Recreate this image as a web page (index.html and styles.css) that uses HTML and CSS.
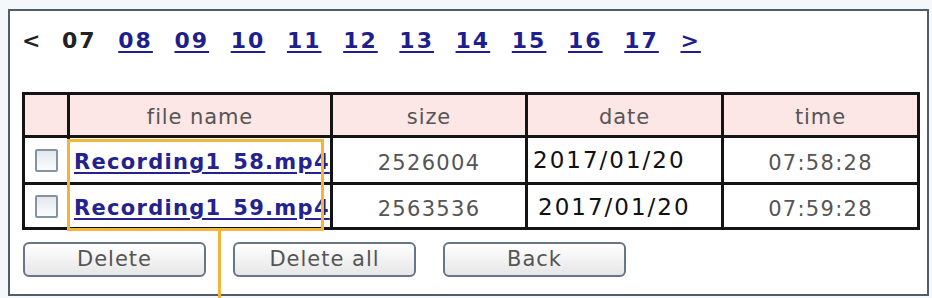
FILE: index.html
```html
<!DOCTYPE html>
<html>
<head>
<meta charset="utf-8">
<link rel="stylesheet" href="styles.css">
</head>
<body>
<div class="frame">
  <nav class="pager">
    <span class="arrow">&lt;</span>
    <span class="current">07</span>
    <a href="#">08</a>
    <a href="#">09</a>
    <a href="#">10</a>
    <a href="#">11</a>
    <a href="#">12</a>
    <a href="#">13</a>
    <a href="#">14</a>
    <a href="#">15</a>
    <a href="#">16</a>
    <a href="#">17</a>
    <a href="#" class="next">&gt;</a>
  </nav>
  <table class="files">
    <colgroup>
      <col class="c-chk">
      <col class="c-name">
      <col class="c-size">
      <col class="c-date">
      <col class="c-time">
    </colgroup>
    <thead>
      <tr><th></th><th>file name</th><th>size</th><th>date</th><th>time</th></tr>
    </thead>
    <tbody>
      <tr class="r1">
        <td class="chk"><span class="box"></span></td>
        <td class="name"><a href="#">Recording1_58.mp4</a></td>
        <td class="num">2526004</td>
        <td class="date">2017/01/20</td>
        <td class="num">07:58:28</td>
      </tr>
      <tr class="r2">
        <td class="chk"><span class="box"></span></td>
        <td class="name"><a href="#">Recording1_59.mp4</a></td>
        <td class="num">2563536</td>
        <td class="date">2017/01/20</td>
        <td class="num">07:59:28</td>
      </tr>
    </tbody>
  </table>
  <div class="actions">
    <button type="button" class="btn">Delete</button>
    <button type="button" class="btn">Delete all</button>
    <button type="button" class="btn">Back</button>
  </div>
</div>
<div class="callout"></div>
<div class="callout-line"></div>
</body>
</html>
```

FILE: styles.css
```css
html, body {
  margin: 0;
  padding: 0;
}
body {
  position: relative;
  width: 932px;
  height: 298px;
  overflow: hidden;
  background: #f5f7fa;
  font-family: "DejaVu Sans", Verdana, sans-serif;
}
.frame {
  box-sizing: border-box;
  margin: 9px 0 0 8px;
  width: 921px;
  height: 287px;
  border: 2px solid #525d6b;
  background: #ffffff;
  padding: 17px 0 0 12px;
}
.pager {
  display: flex;
  align-items: baseline;
  gap: 21.6px;
  font-size: 22px;
  line-height: 26px;
  font-weight: bold;
  letter-spacing: 2px;
}
.pager .arrow {
  color: #222;
  margin-right: -2px;
}
.pager .current {
  color: #222;
}
.pager a {
  color: #1e1e8c;
  text-decoration: underline;
  text-decoration-thickness: 2px;
  text-underline-offset: 3px;
}
.files {
  margin-top: 38px;
  border-collapse: collapse;
  table-layout: fixed;
  width: 898px;
}
.c-chk { width: 45px; }
.c-name { width: 263px; }
.c-size { width: 195px; }
.c-date { width: 196px; }
.c-time { width: 196px; }
.files th,
.files td {
  border: 3px solid #141414;
  padding: 0;
}
.files thead tr { height: 43px; }
.files th {
  background: #fce6e6;
  color: #555555;
  font-weight: normal;
  font-size: 21px;
  letter-spacing: 0.9px;
  text-align: center;
  padding-top: 4px;
}
.files .r1 { height: 47px; }
.files .r2 { height: 45px; }
.files td {
  padding-top: 4px;
  white-space: nowrap;
  overflow: hidden;
}
.files td.chk {
  text-align: center;
  padding-top: 0;
}
.box {
  display: inline-block;
  vertical-align: middle;
  box-sizing: border-box;
  width: 23px;
  height: 23px;
  border: 2px solid #8592a2;
  border-radius: 2px;
  background: linear-gradient(#e3e8ee, #fbfcfd);
}
.files td.name {
  text-align: left;
  padding-left: 4px;
}
.name a {
  color: #24228e;
  font-weight: bold;
  font-size: 21px;
  letter-spacing: 1.3px;
  text-decoration: underline;
  text-decoration-thickness: 2px;
  text-underline-offset: 3px;
}
.files td.num {
  text-align: center;
  color: #555555;
  font-size: 21px;
  letter-spacing: 1.3px;
  padding-top: 6px;
}
.files td.date {
  text-align: left;
  color: #111111;
  font-size: 23px;
  letter-spacing: 2px;
}
.files .r1 td.date {
  padding: 4px 0 4px 5px;
}
.files .r2 td.date {
  padding: 1px 0 0 10px;
}
.actions {
  display: flex;
  gap: 27px;
  margin: 12px 0 0 1px;
}
.btn {
  box-sizing: border-box;
  width: 183px;
  height: 35px;
  border: 2px solid #66768a;
  border-radius: 6px;
  background: linear-gradient(#ffffff, #e6e6e6);
  color: #555555;
  font-family: "DejaVu Sans", Verdana, sans-serif;
  font-size: 21px;
  letter-spacing: 1px;
  padding: 0;
  line-height: 29px;
}
.callout {
  position: absolute;
  left: 67px;
  top: 139px;
  width: 257px;
  height: 92px;
  box-sizing: border-box;
  border: 3px solid #f1b53a;
}
.callout-line {
  position: absolute;
  left: 218px;
  top: 231px;
  width: 3px;
  height: 70px;
  background: #f1b53a;
}
```
